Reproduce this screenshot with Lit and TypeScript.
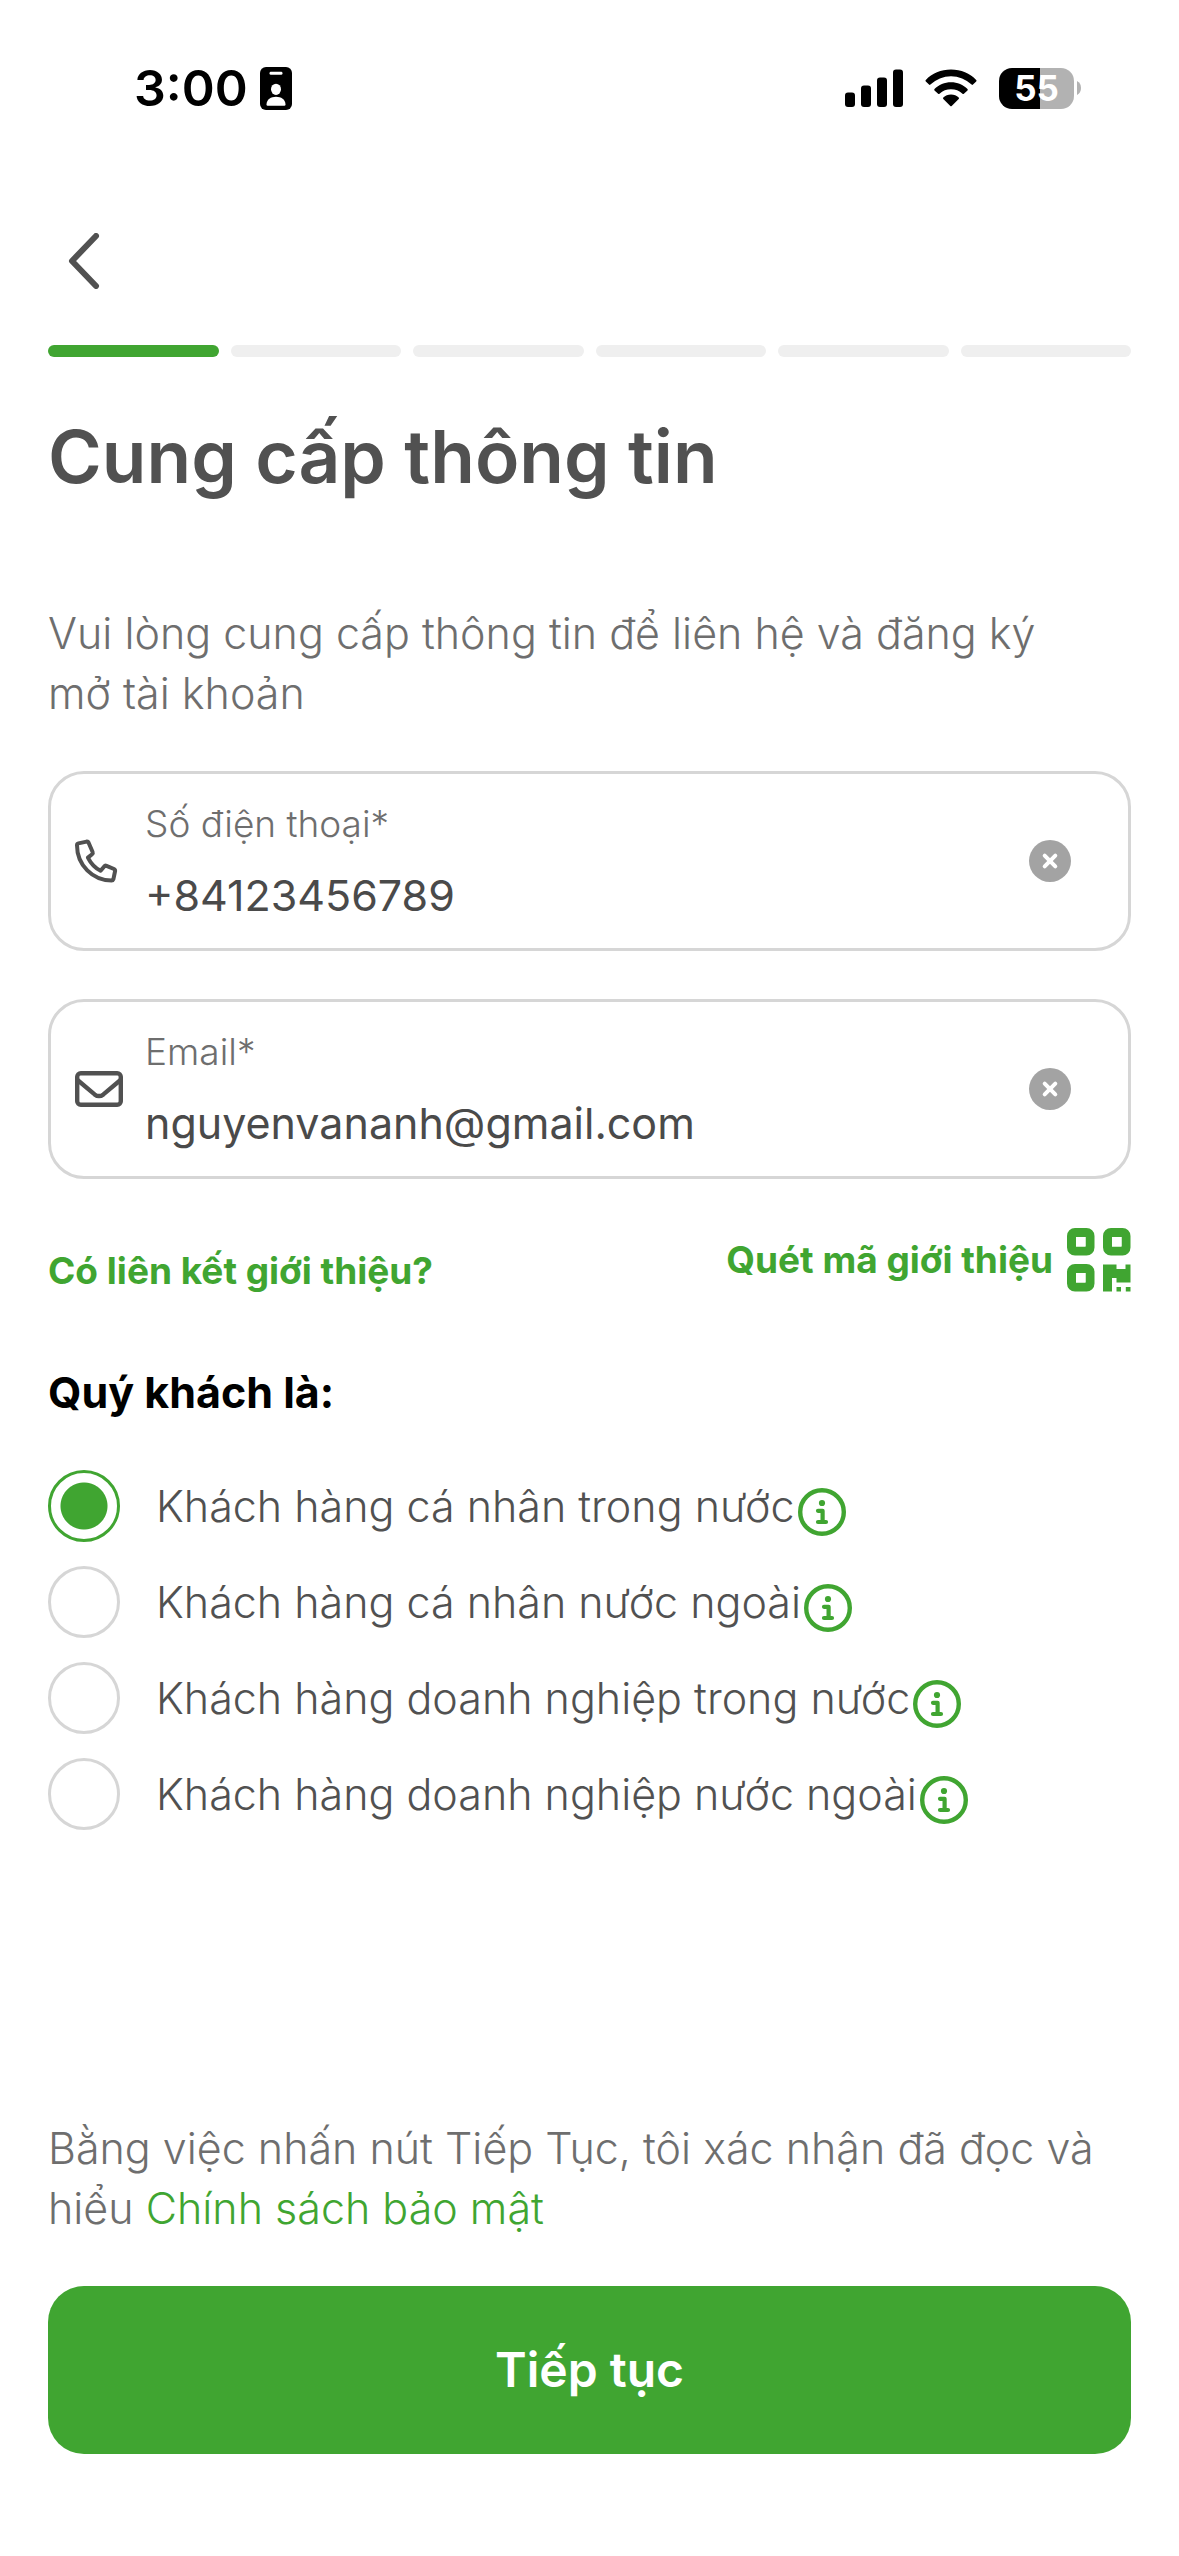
import { LitElement, html, css, svg } from "lit";
import { customElement, property, state } from "lit/decorators.js";
import { classMap } from "lit/directives/class-map.js";

const phoneIcon = html`<svg class="glyph" viewBox="0 0 48 48" width="48" height="48" aria-hidden="true">
  <path
    d="M3.4 6.4 L11.6 4.6 Q13 4.4 13.6 5.7 L17.6 15 Q18.1 16.2 17.1 17.2 L12.9 20.6 Q17.4 29.6 25.6 33.8 L29.2 29.4 Q30.1 28.3 31.5 28.8 L39 32 Q40.3 32.6 40.1 34 L38.4 42.2 Q38 43.5 36.6 43.5 C17.8 43.4 2 28.2 2 8.2 Q2 6.7 3.4 6.4 Z"
    fill="none" stroke="currentColor" stroke-width="4" stroke-linejoin="round"/>
</svg>`;

const mailIcon = html`<svg class="glyph" viewBox="0 0 48 48" width="48" height="48" aria-hidden="true">
  <rect x="2.2" y="8.2" width="43.6" height="31.6" rx="3.6" fill="none" stroke="currentColor" stroke-width="4.4"/>
  <path d="M2.5 15 L19.6 29.4 Q24 32.8 28.4 29.4 L45.5 15" fill="none" stroke="currentColor" stroke-width="4.4"/>
</svg>`;

const infoIcon = html`<svg viewBox="0 0 48 48" width="48" height="48" aria-hidden="true">
  <circle cx="24" cy="24" r="21.8" fill="none" stroke="currentColor" stroke-width="4.4"/>
  <circle cx="24" cy="15" r="3.1" fill="currentColor"/>
  <path d="M20 22.8 H24.6 V34 M20 34 H28" fill="none" stroke="currentColor" stroke-width="4.2" stroke-linecap="round" stroke-linejoin="round"/>
</svg>`;

const qrIcon = html`<svg viewBox="0 0 64 64" width="64" height="64" aria-hidden="true">
  ${[[0, 0], [36, 0], [0, 36]].map(
    ([x, y]) => svg`<rect x=${x + 4.5} y=${y + 4.5} width="18.5" height="18.5" rx="3.5" fill="none" stroke="currentColor" stroke-width="9"/>
      <rect x=${x + 9} y=${y + 9} width="9.5" height="9.5" fill="#fff"/>`
  )}
  <path d="M36 36.5 H49.5 V41 H58.5 V36.5 H63.5 V54.5 H49.5 V50 H45 V63.5 H36 Z" fill="currentColor"/>
  <rect x="49.5" y="59" width="4.5" height="4.5" fill="currentColor"/>
  <rect x="58.8" y="59" width="4.7" height="4.5" fill="currentColor"/>
</svg>`;

@customElement("status-bar")
class StatusBar extends LitElement {
  static styles = css`
    :host {
      display: flex;
      align-items: center;
      justify-content: space-between;
      height: 176px;
      padding: 0 98px 0 134px;
      color: #000;
    }
    .left,
    .right {
      display: flex;
      align-items: center;
    }
    .left {
      gap: 12px;
    }
    .right {
      gap: 22px;
    }
    .time {
      font-size: 50px;
      font-weight: 600;
      line-height: 60px;
    }
    .battery {
      display: flex;
      align-items: center;
      gap: 3px;
    }
    .cell {
      width: 75px;
      border-radius: 13px;
      background: linear-gradient(90deg, #000 55%, #b2b2b2 55%);
      color: #fff;
      font-size: 35px;
      font-weight: 700;
      line-height: 41px;
      text-align: center;
    }
    svg {
      display: block;
    }
  `;

  render() {
    return html`
      <div class="left">
        <span class="time">3:00</span>
        <svg viewBox="0 0 32 43" width="32" height="43" aria-hidden="true">
          <rect width="32" height="43" rx="6" fill="#000"/>
          <rect x="9.5" y="4.8" width="13" height="3" rx="1.4" fill="#fff"/>
          <ellipse cx="16" cy="22.3" rx="5" ry="5.6" fill="#fff"/>
          <path d="M6.5 37.6 C6.5 32.5 11 29.8 16 29.8 S25.5 32.5 25.5 37.6 Q25.5 38.8 24.3 38.8 H7.7 Q6.5 38.8 6.5 37.6 Z" fill="#fff"/>
        </svg>
      </div>
      <div class="right">
        <svg viewBox="0 0 58 38" width="58" height="38" aria-hidden="true">
          <rect x="0" y="23.5" width="10" height="14.5" rx="3"/>
          <rect x="16" y="16.5" width="10" height="21.5" rx="3"/>
          <rect x="32" y="8.5" width="10" height="29.5" rx="3"/>
          <rect x="48" y="0.5" width="10" height="37.5" rx="3"/>
        </svg>
        <svg viewBox="0 0 52 38" width="52" height="38" aria-hidden="true">
          <path d="M26 .6 C36 .6 45 4.6 51.2 11 Q51.8 11.7 51.2 12.4 L48 15.6 Q47.3 16.2 46.6 15.6 A29.5 29.5 0 0 0 5.4 15.6 Q4.7 16.2 4 15.6 L.8 12.4 Q.2 11.7 .8 11 C7 4.6 16 .6 26 .6 Z"/>
          <path d="M26 13.2 C32.4 13.2 38.3 15.8 42.5 20 Q43.1 20.7 42.5 21.4 L38.9 24.8 Q38.2 25.4 37.5 24.8 A17 17 0 0 0 14.5 24.8 Q13.8 25.4 13.1 24.8 L9.5 21.4 Q8.9 20.7 9.5 20 C13.7 15.8 19.6 13.2 26 13.2 Z"/>
          <path d="M26 25.6 C29 25.6 31.7 26.7 33.7 28.6 Q34.4 29.3 33.7 30 L26.7 37 Q26 37.7 25.3 37 L18.3 30 Q17.6 29.3 18.3 28.6 C20.3 26.7 23 25.6 26 25.6 Z"/>
        </svg>
        <div class="battery">
          <div class="cell">55</div>
          <svg viewBox="0 0 4 14" width="4" height="14" aria-hidden="true"><path d="M0 0 Q4 2 4 7 T0 14 Z" fill="#b2b2b2"/></svg>
        </div>
      </div>
    `;
  }
}

@customElement("text-field")
class TextField extends LitElement {
  @property() label = "";
  @property() value = "";
  @property() kind = "text";
  @property() mode = "text";

  static styles = css`
    :host {
      display: block;
    }
    .box {
      display: flex;
      align-items: center;
      border: 3px solid #d6d6d6;
      border-radius: 36px;
      padding: 23px 57px 23px 24px;
    }
    .glyph {
      display: block;
      flex: none;
      color: #515151;
    }
    .text {
      display: flex;
      flex-direction: column;
      flex: 1;
      min-width: 0;
      gap: 14px;
      margin: 0 24px 0 22px;
    }
    label {
      color: #6e6e6e;
      font-size: 37px;
      line-height: 54px;
      font-weight: 300;
    }
    input {
      box-sizing: border-box;
      width: 100%;
      height: 60px;
      margin: 0;
      padding: 0;
      border: 0;
      outline: 0;
      background: none;
      color: #4a4a4a;
      font: inherit;
      font-size: 43px;
      line-height: 60px;
    }
    .clear {
      display: block;
      padding: 0;
      border: 0;
      background: none;
      cursor: pointer;
    }
    .clear svg {
      display: block;
    }
  `;

  private clear() {
    this.value = "";
  }

  private onInput(e: Event) {
    this.value = (e.target as HTMLInputElement).value;
  }

  render() {
    return html`
      <div class="box">
        ${this.kind === "email" ? mailIcon : phoneIcon}
        <div class="text">
          <label for="control">${this.label}</label>
          <input id="control" type="text" inputmode=${this.mode} .value=${this.value} @input=${this.onInput} />
        </div>
        <button class="clear" type="button" aria-label="Xóa" @click=${this.clear}>
          <svg viewBox="0 0 42 42" width="42" height="42" aria-hidden="true">
            <circle cx="21" cy="21" r="21" fill="#a3a3a3"/>
            <path d="M15.7 15.7 L26.3 26.3 M26.3 15.7 L15.7 26.3" stroke="#fff" stroke-width="4" stroke-linecap="round"/>
          </svg>
        </button>
      </div>
    `;
  }
}

@customElement("app-root")
class AppRoot extends LitElement {
  @state() private selected = 0;

  private readonly options = [
    "Khách hàng cá nhân trong nước",
    "Khách hàng cá nhân nước ngoài",
    "Khách hàng doanh nghiệp trong nước",
    "Khách hàng doanh nghiệp nước ngoài",
  ];

  static styles = css`
    :host {
      display: flex;
      flex-direction: column;
      box-sizing: border-box;
      min-height: 100vh;
      background: #fff;
      color: #515151;
      font-family: Inter, "Noto Sans", "Liberation Sans", sans-serif;
      font-optical-sizing: none;
    }
    * {
      box-sizing: border-box;
    }
    button {
      margin: 0;
      padding: 0;
      border: 0;
      background: none;
      color: inherit;
      font: inherit;
      cursor: pointer;
    }
    a {
      color: #40a531;
      text-decoration: none;
    }
    svg {
      display: block;
    }
    main {
      display: flex;
      flex-direction: column;
      flex: 1;
      padding: 46px 48px 102px;
    }
    .back {
      align-self: flex-start;
      padding: 11px 20px;
      margin-bottom: 45px;
    }
    .steps {
      display: flex;
      gap: 12px;
      margin: 0 0 56px;
      padding: 0;
      list-style: none;
    }
    .step {
      flex: 1;
      height: 12px;
      border-radius: 6px;
      background: #efefef;
    }
    .step.done {
      background: #40a531;
    }
    h1 {
      margin: 0 0 102px;
      font-size: 73px;
      line-height: 88px;
      font-weight: 600;
    }
    .copy {
      margin: 0;
      color: #6e6e6e;
      font-size: 43px;
      line-height: 60px;
      font-weight: 300;
    }
    .intro {
      padding-right: 48px;
    }
    .fields {
      display: flex;
      flex-direction: column;
      gap: 48px;
      margin: 48px 0 49px;
    }
    .referral {
      display: flex;
      align-items: flex-end;
      justify-content: space-between;
      font-size: 37px;
      line-height: 42px;
      font-weight: 700;
    }
    .scan {
      display: flex;
      align-items: center;
      gap: 14px;
      color: #40a531;
    }
    fieldset {
      display: flex;
      flex-direction: column;
      gap: 24px;
      min-width: 0;
      margin: 70px 0 48px;
      padding: 0;
      border: 0;
    }
    legend {
      padding: 0;
      margin-bottom: 48px;
      color: #000;
      font-size: 43px;
      line-height: 60px;
      font-weight: 700;
    }
    .option {
      display: flex;
      align-items: center;
    }
    .option label {
      display: flex;
      align-items: center;
      gap: 36px;
      font-size: 43px;
      line-height: 60px;
      font-weight: 300;
    }
    .option input {
      appearance: none;
      flex: none;
      width: 72px;
      height: 72px;
      margin: 0;
      border: 3px solid #d6d6d6;
      border-radius: 50%;
    }
    .option input:checked {
      border-color: #40a531;
      background: radial-gradient(circle, #40a531 23px, transparent 24px);
    }
    .info {
      margin: 12px 0 0 3px;
      color: #40a531;
    }
    footer {
      display: flex;
      flex-direction: column;
      gap: 48px;
      margin-top: auto;
    }
    .submit {
      padding: 54px 48px;
      border-radius: 36px;
      background: #40a531;
      color: #fff;
      font-size: 48px;
      line-height: 60px;
      font-weight: 600;
      text-align: center;
    }
  `;

  render() {
    return html`
      <status-bar></status-bar>
      <main>
        <button class="back" type="button" aria-label="Quay lại">
          <svg viewBox="0 0 32 56" width="32" height="56" aria-hidden="true">
            <path d="M28 3 L4 28 L28 53" fill="none" stroke="#515151" stroke-width="6" stroke-linecap="round" stroke-linejoin="round"/>
          </svg>
        </button>
        <ol class="steps">
          ${[0, 1, 2, 3, 4, 5].map((i) => html`<li class=${classMap({ step: true, done: i === 0 })}></li>`)}
        </ol>
        <h1>Cung cấp thông tin</h1>
        <p class="copy intro">Vui lòng cung cấp thông tin để liên hệ và đăng ký mở tài khoản</p>
        <div class="fields">
          <text-field label="Số điện thoại*" value="+84123456789" kind="phone" mode="tel"></text-field>
          <text-field label="Email*" value="nguyenvananh@gmail.com" kind="email" mode="email"></text-field>
        </div>
        <div class="referral">
          <a href="#referral">Có liên kết giới thiệu?</a>
          <button class="scan" type="button"><span>Quét mã giới thiệu</span>${qrIcon}</button>
        </div>
        <fieldset>
          <legend>Quý khách là:</legend>
          ${this.options.map(
            (text, i) => html`<div class="option">
              <label>
                <input type="radio" name="customer" .checked=${i === this.selected} @change=${() => (this.selected = i)} />
                <span>${text}</span>
              </label>
              <button class="info" type="button" aria-label="Thông tin">${infoIcon}</button>
            </div>`
          )}
        </fieldset>
        <footer>
          <p class="copy">
            Bằng việc nhấn nút Tiếp Tục, tôi xác nhận đã đọc và hiểu <a href="#privacy">Chính sách bảo mật</a>
          </p>
          <button class="submit" type="button">Tiếp tục</button>
        </footer>
      </main>
    `;
  }
}
